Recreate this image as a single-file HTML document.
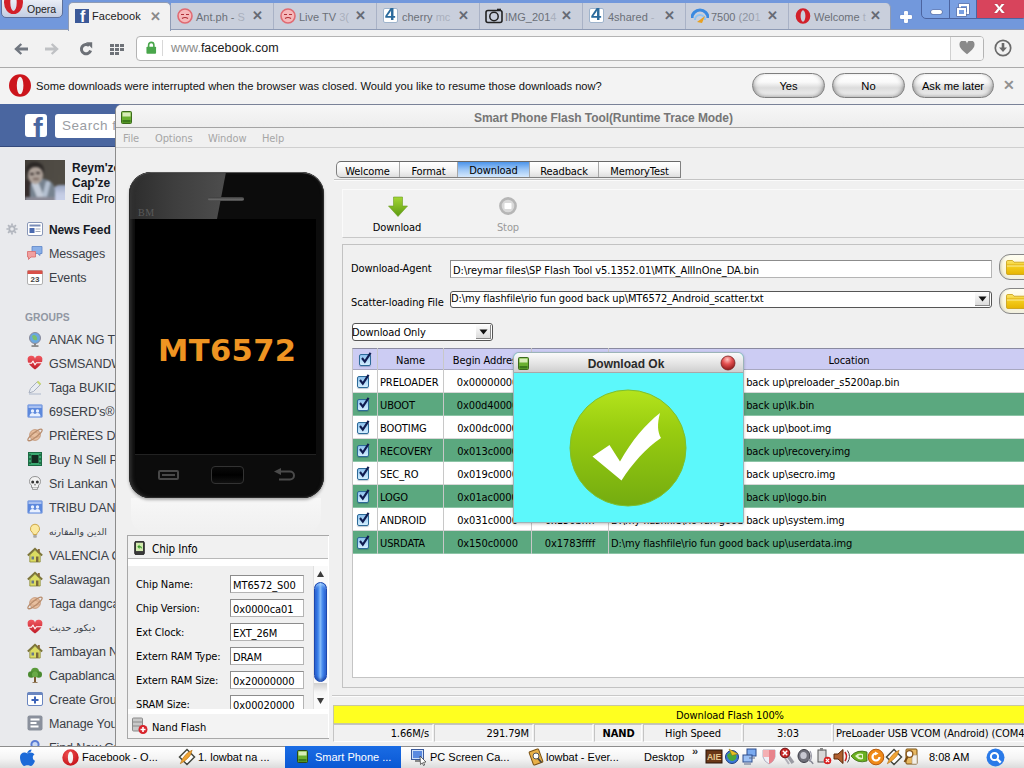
<!DOCTYPE html>
<html>
<head>
<meta charset="utf-8">
<title>Smart Phone Flash Tool</title>
<style>
html,body{margin:0;padding:0;}
body{width:1024px;height:768px;overflow:hidden;position:relative;background:#e9eaed;font-family:"Liberation Sans",sans-serif;font-size:12px;color:#000;}
.a{position:absolute;}
.t{position:absolute;white-space:pre;line-height:14px;}
.th{font-family:"DejaVu Sans Condensed","Liberation Sans",sans-serif;font-size:11px;margin-top:1px;letter-spacing:-0.1px;}
/* ---------- opera chrome ---------- */
#tabbar{left:0;top:0;width:1024px;height:30px;background:#7298dc;}
#toolbar{left:0;top:29px;width:1024px;height:39px;background:#f2f2f2;border-top:1px solid #8e9bb5;box-sizing:border-box;}
#infobar{left:0;top:67px;width:1024px;height:37px;background:#f3f3f3;border-top:1px solid #ababab;box-sizing:border-box;}
.tab{position:absolute;top:3px;height:26px;width:103px;background:#c9cfdc;border-right:1px solid #a9b2c6;box-sizing:border-box;}
.tab .lbl{position:absolute;left:25px;top:7px;font-size:11px;color:#6b6f78;white-space:pre;line-height:14px;}
.tab .x{position:absolute;left:81px;top:6px;font-size:13px;font-weight:bold;color:#666a74;line-height:14px;}
.pill{position:absolute;top:73px;height:25px;border:1px solid #7e7e7e;border-radius:12.5px;box-sizing:border-box;background:linear-gradient(#ffffff 0%,#fafafa 35%,#dcdcdc 60%,#f2f2f2 100%);text-align:center;font-size:11.2px;line-height:25px;box-shadow:inset 0 -2px 3px rgba(0,0,0,.16),inset 4px 0 5px -3px rgba(0,0,0,.25),inset -4px 0 5px -3px rgba(0,0,0,.25);}
/* ---------- facebook ---------- */
#fbhead{left:0;top:104px;width:1024px;height:43px;background:#4a66a0;border-bottom:1px solid #33497c;box-sizing:border-box;}
.fbi{position:absolute;left:49px;margin-top:1px;font-size:12.5px;letter-spacing:-0.12px;color:#3b3f47;white-space:pre;line-height:16px;}
.ico{position:absolute;left:27px;width:16px;height:16px;}
/* ---------- flash tool ---------- */
#ft{left:115px;top:104px;width:920px;height:643px;background:#f0f0f0;border:1px solid #8c8c8c;border-top-color:#7a8298;border-radius:7px 0 0 0;box-sizing:border-box;overflow:hidden;}
.inp{position:absolute;background:#fff;border:1px solid #b4b4b4;border-top-color:#8c8c8c;border-left-color:#8c8c8c;box-sizing:border-box;}
.row{position:absolute;left:353px;width:680px;height:22px;}
.g{background:#5ba87f;}
.w{background:#ffffff;}
.cb{position:absolute;left:4px;top:6px;width:12px;height:12px;box-sizing:border-box;border:1.5px solid #2c6a98;border-radius:2px;background:linear-gradient(#8cc0ec,#b4dcf8 55%,#d4eefe);box-shadow:0 1px 1px rgba(0,40,80,.25);}
.cb svg{position:absolute;left:-1px;top:-5px;}
.vl{position:absolute;top:348px;width:1px;height:206px;background:#c8c8c8;}
/* ---------- taskbar ---------- */
#task{left:0;top:746px;width:1024px;height:22px;background:linear-gradient(#ffffff,#f4f4f4 55%,#dcdcdc);border-top:1px solid #8e8e8e;box-sizing:border-box;}
.tk{position:absolute;top:750px;font-size:11px;white-space:pre;line-height:14px;color:#000;}
</style>
</head>
<body>
<div class="a" id="tabbar"></div>
<!-- opera menu button -->
<div class="a" style="left:1px;top:-3px;width:62px;height:21px;border:1px solid #5c6f9a;border-radius:0 0 5px 5px;box-sizing:border-box;background:linear-gradient(#eef1f8,#c3cde2);overflow:hidden;">
  <svg class="a" style="left:0;top:-7px" width="24" height="24" viewBox="0 0 24 24"><path fill-rule="evenodd" fill="#d2202a" d="M11.500 0a9.500 11.500 0 1 0 0 23a9.500 11.500 0 1 0 0-23zM11.500 3a3.200 8.500 0 1 1 0 17a3.200 8.500 0 1 1 0-17z"/></svg>
  <div class="t" style="left:25px;top:4px;font-size:10.500px;color:#222;">Opera</div>
</div>
<!-- inactive tabs -->
<div class="tab" style="left:171px;"><svg class="a" style="left:6px;top:5px" width="16" height="16" viewBox="0 0 16 16"><circle cx="8" cy="8" r="7" fill="#f6b8ba" stroke="#e06a72" stroke-width="1.6"/><path d="M4 6.5h3M9 6.5h3M5 10.5q3 -2 6 0" stroke="#b03038" stroke-width="1.2" fill="none"/></svg><span class="lbl">Ant.ph - <span style="color:#aab0bd">S</span></span><span class="x">✕</span></div>
<div class="tab" style="left:274px;"><svg class="a" style="left:6px;top:5px" width="16" height="16" viewBox="0 0 16 16"><circle cx="8" cy="8" r="7" fill="#f6b8ba" stroke="#e06a72" stroke-width="1.6"/><path d="M4 6.5h3M9 6.5h3M5 10.5q3 -2 6 0" stroke="#b03038" stroke-width="1.2" fill="none"/></svg><span class="lbl">Live TV <span style="color:#aab0bd">3(</span></span><span class="x">✕</span></div>
<div class="tab" style="left:377px;"><div class="a" style="left:6px;top:5px;width:15px;height:15px;background:#fff;border:1px solid #9fb4cc;box-sizing:border-box;border-radius:2px;"></div><div class="t" style="left:8px;top:3px;font-size:16px;font-weight:bold;color:#2a6a9c;line-height:18px;transform:scaleX(1.15);transform-origin:0 0;">4</div><span class="lbl">cherry <span style="color:#aab0bd">mc</span></span><span class="x">✕</span></div>
<div class="tab" style="left:480px;"><svg class="a" style="left:5px;top:5px" width="18" height="16" viewBox="0 0 18 16"><rect x="1" y="2.5" width="16" height="12" rx="2" fill="none" stroke="#222" stroke-width="1.6"/><circle cx="9" cy="8.5" r="4.2" fill="none" stroke="#222" stroke-width="1.5"/><path d="M12 1.5h4" stroke="#222" stroke-width="1.6"/></svg><span class="lbl">IMG_201<span style="color:#aab0bd">4</span></span><span class="x">✕</span></div>
<div class="tab" style="left:583px;"><div class="a" style="left:6px;top:5px;width:15px;height:15px;background:#fff;border:1px solid #9fb4cc;box-sizing:border-box;border-radius:2px;"></div><div class="t" style="left:8px;top:3px;font-size:16px;font-weight:bold;color:#2a6a9c;line-height:18px;transform:scaleX(1.15);transform-origin:0 0;">4</div><span class="lbl">4shared <span style="color:#aab0bd">-</span></span><span class="x">✕</span></div>
<div class="tab" style="left:686px;"><svg class="a" style="left:5px;top:5px" width="18" height="16" viewBox="0 0 18 16"><path d="M1 10a8 8 0 0 1 16 0" fill="none" stroke="#3a8ae0" stroke-width="3"/><path d="M4 12a5 5 0 0 1 10 0" fill="none" stroke="#8cc4f4" stroke-width="2"/><path d="M6 14l8-6-3 7z" fill="#e8a020"/></svg><span class="lbl">7500 <span style="color:#8e94a1">(20</span><span style="color:#aab0bd">1</span></span><span class="x">✕</span></div>
<div class="tab" style="left:789px;width:102px;border-radius:0 5px 0 0;border-right:1px solid #8e9bb5;"><svg class="a" style="left:6px;top:5px" width="16" height="16" viewBox="0 0 16 16"><path fill-rule="evenodd" fill="#d2202a" d="M8 .3a7.300 7.700 0 1 0 0 15.400a7.300 7.700 0 1 0 0-15.400zM8 2.300a2.400 5.700 0 1 1 0 11.400a2.400 5.700 0 1 1 0-11.400z"/></svg><span class="lbl">Welcome <span style="color:#aab0bd">t</span></span><span class="x">✕</span></div>
<!-- active tab -->
<div class="a" style="left:68px;top:2px;width:103px;height:29px;z-index:3;background:#f2f2f2;border:1px solid #8e9bb5;border-bottom:none;border-radius:5px 5px 0 0;box-sizing:border-box;">
  <div class="a" style="left:6px;top:6px;width:14px;height:14px;background:#3b5998;overflow:hidden;"><div class="t" style="left:5px;top:-1px;font-size:16px;font-weight:bold;color:#fff;line-height:18px;">f</div></div>
  <div class="t" style="left:23px;top:6px;font-size:11px;color:#1c1c1c;letter-spacing:.05px;">Facebook</div>
  <div class="t" style="left:81px;top:7px;font-size:13px;font-weight:bold;color:#8a8a8a;">✕</div>
</div>
<!-- new tab + -->
<div class="a" style="left:903.5px;top:11px;width:4px;height:11.5px;border-radius:1px;background:#fff;box-shadow:0 0 1px rgba(60,80,140,.6);"></div>
<div class="a" style="left:900px;top:14.7px;width:11.5px;height:4px;border-radius:1px;background:#fff;box-shadow:0 0 1px rgba(60,80,140,.6);"></div>
<!-- window controls -->
<div class="a" style="left:921px;top:-3px;width:106px;height:22px;border:1px solid #4c64a0;border-radius:0 0 5px 5px;box-sizing:border-box;background:#7aa0e2;overflow:hidden;">
  <div class="a" style="left:27px;top:0;width:1px;height:22px;background:#4c64a0;"></div>
  <div class="a" style="left:54px;top:0;width:52px;height:22px;background:#d8445c;border-left:1px solid #4c64a0;"></div>
  <div class="a" style="left:9px;top:11.500px;width:11px;height:4.500px;background:#fff;border-radius:2px;box-shadow:0 0 0 .6px #5a6a9a;"></div>
  <div class="a" style="left:37px;top:6px;width:10px;height:10px;border:2px solid #fff;box-sizing:border-box;box-shadow:0 0 0 .6px #5a6a9a;"></div>
  <div class="a" style="left:35px;top:9.500px;width:8.500px;height:8px;border:2px solid #fff;box-sizing:border-box;background:#7aa0e2;box-shadow:0 0 0 .6px #5a6a9a;"></div>
  <div class="t" style="left:72px;top:1px;font-size:17px;font-weight:bold;color:#fff;line-height:18px;transform:scaleX(1.15);transform-origin:0 0;text-shadow:0 0 1px #7a2030;">x</div>
</div>
<!-- toolbar -->
<div class="a" id="toolbar"></div>
<svg class="a" style="left:12px;top:41px" width="116" height="16" viewBox="0 0 116 16">
  <path d="M2.200 8l6.300-5.800 1.600 1.600-2.900 2.700h8.800v3h-8.800l2.900 2.700-1.600 1.600z" fill="#717780"/>
  <path d="M46.800 8l-6.300-5.800-1.600 1.600 2.900 2.700h-8.800v3h8.800l-2.900 2.700 1.600 1.600z" fill="#bfc1c4"/>
  <path d="M77.200 4.600a4.700 4.700 0 1 0 1.400 4.900" fill="none" stroke="#6c7076" stroke-width="3"/>
  <path d="M74 1.200h6.200v6.200z" fill="#6c7076"/>
  <g fill="#6e7278"><rect x="98" y="3" width="4" height="3"/><rect x="103" y="3" width="4" height="3"/><rect x="108" y="3" width="4" height="3"/><rect x="98" y="7" width="4" height="3"/><rect x="103" y="7" width="4" height="3"/><rect x="108" y="7" width="4" height="3"/><rect x="98" y="11" width="4" height="3"/><rect x="103" y="11" width="4" height="3"/></g>
</svg>
<div class="a" style="left:136px;top:36px;width:848px;height:25px;background:#fff;border:1px solid #b4b4b4;border-radius:4px;box-sizing:border-box;"></div>
<svg class="a" style="left:146px;top:41px" width="10.500" height="13.200" viewBox="0 0 12 15"><path d="M3 7v-2.500a3 3 0 0 1 6 0v2.500" fill="none" stroke="#49a64b" stroke-width="1.8"/><rect x="0.500" y="6.500" width="11" height="8" rx="1" fill="#49a64b"/></svg>
<div class="a" style="left:162px;top:40px;width:1px;height:16px;background:#d8d8d8;"></div>
<div class="t" style="left:171px;top:41px;font-size:12.500px;color:#1a1a1a;"><span style="color:#8a8a8a">www.</span>facebook.com</div>
<div class="a" style="left:950px;top:37px;width:1px;height:23px;background:#d0d0d0;"></div>
<div class="a" style="left:951px;top:37px;width:32px;height:23px;background:#f6f6f6;border-radius:0 3px 3px 0;"></div>
<svg class="a" style="left:959px;top:41px" width="16" height="14" viewBox="0 0 18 16"><path d="M9 15C2 9.500 0.500 7 0.500 4.500A4 4 0 0 1 9 3a4 4 0 0 1 8.500 1.500C17.500 7 16 9.500 9 15z" fill="#8a8a8a"/></svg>
<svg class="a" style="left:993px;top:38px" width="20" height="20" viewBox="0 0 20 20"><circle cx="10" cy="10" r="7.700" fill="none" stroke="#6a6a6a" stroke-width="1.700"/><path d="M8.700 5h2.600v4.500h2.700l-4 4.500-4-4.500h2.700z" fill="#6a6a6a"/></svg>
<!-- infobar -->
<div class="a" id="infobar"></div>
<svg class="a" style="left:8px;top:73px" width="24" height="26" viewBox="0 0 24 26"><path fill-rule="evenodd" fill="#cc151c" d="M12 1.200a11 11.300 0 1 0 0 22.600a11 11.300 0 1 0 0-22.600zM12.100 3.700a3.300 8.800 0 1 1 0 17.600a3.300 8.800 0 1 1 0-17.600z"/></svg>
<div class="t" style="left:36px;top:79px;font-size:11.150px;color:#111;">Some downloads were interrupted when the browser was closed. Would you like to resume those downloads now?</div>
<div class="pill" style="left:752px;width:73px;">Yes</div>
<div class="pill" style="left:832px;width:73px;">No</div>
<div class="pill" style="left:912px;width:82px;">Ask me later</div>
<div class="t" style="left:1003px;top:79px;font-size:13.500px;font-weight:bold;color:#909090;">✕</div>

<div class="a" id="fbhead"></div>
<div class="a" style="left:25px;top:114px;width:22px;height:23px;background:#fff;border-radius:3px;overflow:hidden;"><div class="t" style="left:8px;top:0px;font-size:29px;font-weight:bold;color:#4a66a0;line-height:30px;">f</div></div>
<div class="a" style="left:55px;top:114px;width:300px;height:24px;background:#fff;border-radius:3px;"></div>
<div class="t" style="left:62px;top:117px;font-size:13.500px;letter-spacing:.55px;color:#9a9da3;line-height:18px;">Search f</div>
<!-- profile -->
<div class="a" style="left:25px;top:160px;width:40px;height:40px;background:#4a4640;overflow:hidden;">
  <div class="a" style="left:-4px;top:-4px;width:48px;height:48px;filter:blur(1.1px);">
    <div class="a" style="left:0;top:0;width:48px;height:48px;background:linear-gradient(95deg,#3c3834 0%,#4c4842 40%,#524e46 100%);"></div>
    <div class="a" style="left:31px;top:29px;width:20px;height:22px;background:linear-gradient(#98a4c0,#c4cce4 40%,#ccd4ec);border-radius:8px 0 0 0;"></div>
    <div class="a" style="left:3px;top:24px;width:10px;height:18px;background:#342c2c;"></div>
    <div class="a" style="left:9px;top:23px;width:25px;height:27px;background:#76828f;border-radius:8px 12px 0 0;"></div>
    <div class="a" style="left:13px;top:24px;width:7px;height:19px;background:#c4ccd8;border-radius:2px;transform:rotate(-22deg);"></div>
    <div class="a" style="left:23px;top:25px;width:5px;height:16px;background:#b4c0d0;border-radius:2px;transform:rotate(14deg);"></div>
    <div class="a" style="left:4px;top:41px;width:30px;height:7px;background:#8a8a96;"></div>
    <div class="a" style="left:5px;top:6px;width:18px;height:16px;border-radius:50% 50% 40% 40%;background:#2c2826;"></div>
    <div class="a" style="left:7px;top:11px;width:15px;height:17px;border-radius:45% 45% 50% 50%;background:#aca098;"></div>
    <div class="a" style="left:9px;top:17px;width:4px;height:2px;background:#3a3230;border-radius:1px;"></div>
    <div class="a" style="left:15px;top:16px;width:4px;height:2px;background:#3a3230;border-radius:1px;"></div>
    <div class="a" style="left:12px;top:22px;width:6px;height:2px;background:#7a6860;border-radius:1px;"></div>
  </div>
</div>
<div class="t" style="left:72px;top:161px;font-size:12px;font-weight:bold;color:#141823;">Reym'ze</div>
<div class="t" style="left:72px;top:176px;font-size:12px;font-weight:bold;color:#141823;">Cap'ze</div>
<div class="t" style="left:72px;top:192px;font-size:12px;color:#141823;">Edit Profile</div>
<!-- nav -->
<svg class="a" style="left:6px;top:223px" width="12" height="12" viewBox="0 0 14 14"><circle cx="7" cy="7" r="3.200" fill="none" stroke="#b2b6be" stroke-width="2.200"/><g stroke="#b2b6be" stroke-width="2"><path d="M7 .5v2.500M7 11v2.500M.5 7h2.500M11 7h2.500M2.400 2.400l1.800 1.800M9.800 9.800l1.800 1.800M2.400 11.600l1.800-1.800M9.800 4.200l1.800-1.800"/></g></svg>
<svg class="ico" style="top:221px" viewBox="0 0 16 16"><rect x="0.500" y="1.500" width="15" height="13" rx="1.500" fill="#fff" stroke="#8a98b8"/><rect x="2.500" y="3.500" width="11" height="2" fill="#7a8db8"/><rect x="2.500" y="7" width="5" height="5" fill="#4a6ab0"/><rect x="8.500" y="7.500" width="5" height="1" fill="#a0a8b8"/><rect x="8.500" y="10" width="5" height="1" fill="#a0a8b8"/></svg>
<div class="fbi" style="top:221px;font-size:12px;font-weight:bold;color:#141823;">News Feed</div>
<svg class="ico" style="top:245px" viewBox="0 0 16 16"><path d="M5 1.500h10v7h-2v2l-2.500-2h-5.500z" fill="#8ab0e8" stroke="#5a84c8" stroke-width=".8"/><path d="M.5 6.500h8v5.500h-4.500l-2.500 2.500v-2.500h-1z" fill="#f0a0a0" stroke="#d86a6a" stroke-width=".8"/></svg>
<div class="fbi" style="top:245px;">Messages</div>
<svg class="ico" style="top:269px" viewBox="0 0 16 16"><rect x="0.500" y="1.500" width="15" height="14" rx="1.500" fill="#fff" stroke="#b0b0b0"/><rect x="0.500" y="1.500" width="15" height="3.500" fill="#d85048"/><text x="8" y="13" font-size="8" font-weight="bold" text-anchor="middle" fill="#444" font-family="Liberation Sans, sans-serif">23</text></svg>
<div class="fbi" style="top:269px;">Events</div>
<div class="t" style="left:25px;top:311px;font-size:10.300px;font-weight:bold;color:#9197a3;">GROUPS</div>
<svg class="ico" style="top:331px" viewBox="0 0 16 16"><circle cx="8" cy="7" r="5.500" fill="#6aa8e0" stroke="#8a8a9a" stroke-width="1"/><path d="M5 5q2-2 4 0t1 4q-3 1-4-1z" fill="#7ac070"/><rect x="7" y="12.500" width="2" height="2" fill="#888"/><rect x="4.500" y="14.300" width="7" height="1.500" fill="#777"/></svg>
<div class="fbi" style="top:331px;">ANAK NG TIBAY</div>
<svg class="ico" style="top:355px" viewBox="0 0 16 16"><defs><linearGradient id="gh" x1="0" y1="0" x2="0" y2="1"><stop offset="0" stop-color="#f05860"/><stop offset="1" stop-color="#c01c28"/></linearGradient></defs><path d="M8 14.500C2 10 .7 7.500 .7 5.200A3.600 3.600 0 0 1 8 3.800a3.600 3.600 0 0 1 7.300 1.400C15.300 7.500 14 10 8 14.500z" fill="url(#gh)"/><path d="M1 8.200h3.500l1.500-2 2 3.500 1.500-2h5.500" fill="none" stroke="#fff" stroke-width="1.100"/></svg>
<div class="fbi" style="top:355px;">GSMSANDWICH</div>
<svg class="ico" style="top:379px" viewBox="0 0 16 16"><path d="M2 14l1.500-4.500 7-7 3 3-7 7z" fill="#e8ecf2" stroke="#a8b0c0" stroke-width="1"/><path d="M2 15h12" stroke="#b8c0d0" stroke-width="1.200"/><path d="M10.500 2.500l3 3" stroke="#c8d870" stroke-width="2"/></svg>
<div class="fbi" style="top:379px;">Taga BUKIDNON</div>
<svg class="ico" style="top:403px" viewBox="0 0 16 16"><rect x=".5" y="1.500" width="15" height="13" rx="1.500" fill="#5c88dc" stroke="#9cb4e4"/><rect x="1.500" y="2.500" width="13" height="2.500" fill="#a8c0f0"/><circle cx="5.500" cy="8" r="1.700" fill="#e8f0ff"/><circle cx="10.500" cy="8" r="1.700" fill="#e8f0ff"/><path d="M2.500 13.500q0-3.500 3-3.500t3 3.500zM7.500 13.500q0-3.500 3-3.500t3 3.500z" fill="#e8f0ff"/></svg>
<div class="fbi" style="top:403px;">69SERD's® GROUP</div>
<svg class="ico" style="top:427px" viewBox="0 0 16 16"><circle cx="8" cy="8" r="5.400" fill="#e8c0a0" stroke="#c09070" stroke-width=".8"/><path d="M3.500 6.500q4-2.500 9 0M3 9.500q5 2 10 0" stroke="#d4a484" stroke-width="1" fill="none"/><ellipse cx="8" cy="8" rx="8.800" ry="2.200" fill="none" stroke="#b88c6c" stroke-width="1.300" transform="rotate(-38 8 8)"/></svg>
<div class="fbi" style="top:427px;">PRIÈRES DE FOI</div>
<svg class="ico" style="top:451px" viewBox="0 0 16 16"><rect x="1.500" y="1.500" width="13" height="13" fill="#3aa870" stroke="#1c6a44"/><rect x="4.500" y="4" width="7" height="8" fill="#142a20"/><path d="M2 4h2M2 8h2M2 12h2M12 4h2M12 8h2M12 12h2" stroke="#0c3a24"/></svg>
<div class="fbi" style="top:451px;">Buy N Sell Phones</div>
<svg class="ico" style="top:475px" viewBox="0 0 16 16"><path d="M8 1.500c-3.600 0-5.500 2.300-5.500 5 0 2 .9 3 2 3.700v2.300h7v-2.300c1.100-.7 2-1.700 2-3.700 0-2.700-1.900-5-5.500-5z" fill="#f2f2f2" stroke="#8a8a8a" stroke-width=".9"/><circle cx="5.700" cy="7" r="1.500" fill="#333"/><circle cx="10.300" cy="7" r="1.500" fill="#333"/><path d="M8 8.500l-.8 1.700h1.600z" fill="#333"/><path d="M5.500 12.500v2h5v-2" fill="#e8e8e8" stroke="#8a8a8a" stroke-width=".8"/></svg>
<div class="fbi" style="top:475px;">Sri Lankan Vibes</div>
<svg class="ico" style="top:499px" viewBox="0 0 16 16"><rect x=".5" y="1.500" width="15" height="13" rx="1.500" fill="#5c88dc" stroke="#9cb4e4"/><rect x="1.500" y="2.500" width="13" height="2.500" fill="#a8c0f0"/><circle cx="5.500" cy="8" r="1.700" fill="#e8f0ff"/><circle cx="10.500" cy="8" r="1.700" fill="#e8f0ff"/><path d="M2.500 13.500q0-3.500 3-3.500t3 3.500zM7.500 13.500q0-3.500 3-3.500t3 3.500z" fill="#e8f0ff"/></svg>
<div class="fbi" style="top:499px;">TRIBU DANGCAGAN</div>
<svg class="ico" style="top:523px" viewBox="0 0 16 16"><path d="M8 1.200a4.600 4.600 0 0 0-2.700 8.300c.6.500.9 1 .9 2h3.600c0-1 .3-1.500.9-2a4.600 4.600 0 0 0-2.700-8.300z" fill="#fbe9a0" stroke="#c8a040" stroke-width=".9"/><rect x="6.200" y="12" width="3.600" height="2.800" rx=".8" fill="#a8a8a8"/></svg>
<div class="fbi" style="top:523px;font-family:'DejaVu Sans',sans-serif;font-size:9.3px;direction:rtl;">الدين والمقارنه</div>
<svg class="ico" style="top:547px" viewBox="0 0 16 16"><path d="M.8 8.500l7.200-6.800 7.200 6.800" fill="none" stroke="#7c7438" stroke-width="1.800"/><path d="M2.800 8v7h10.400v-7l-5.200-4.800z" fill="#dcdc62" stroke="#8a8a3a" stroke-width=".8"/><rect x="4.500" y="9.500" width="2.500" height="3" fill="#6a7a8a"/><rect x="9" y="9.500" width="2.500" height="5.500" fill="#7a6a3a"/><rect x="10.800" y="2" width="2" height="3.500" fill="#8a6a3a"/></svg>
<div class="fbi" style="top:547px;">VALENCIA CITY</div>
<svg class="ico" style="top:571px" viewBox="0 0 16 16"><path d="M.8 8.500l7.200-6.800 7.200 6.800" fill="none" stroke="#7c7438" stroke-width="1.800"/><path d="M2.800 8v7h10.400v-7l-5.200-4.800z" fill="#dcdc62" stroke="#8a8a3a" stroke-width=".8"/><rect x="4.500" y="9.500" width="2.500" height="3" fill="#6a7a8a"/><rect x="9" y="9.500" width="2.500" height="5.500" fill="#7a6a3a"/><rect x="10.800" y="2" width="2" height="3.500" fill="#8a6a3a"/></svg>
<div class="fbi" style="top:571px;">Salawagan</div>
<svg class="ico" style="top:595px" viewBox="0 0 16 16"><circle cx="8" cy="8" r="5.400" fill="#e8c0a0" stroke="#c09070" stroke-width=".8"/><path d="M3.500 6.500q4-2.500 9 0M3 9.500q5 2 10 0" stroke="#d4a484" stroke-width="1" fill="none"/><ellipse cx="8" cy="8" rx="8.800" ry="2.200" fill="none" stroke="#b88c6c" stroke-width="1.300" transform="rotate(-38 8 8)"/></svg>
<div class="fbi" style="top:595px;">Taga dangcagan</div>
<svg class="ico" style="top:619px" viewBox="0 0 16 16"><defs><linearGradient id="gh" x1="0" y1="0" x2="0" y2="1"><stop offset="0" stop-color="#f05860"/><stop offset="1" stop-color="#c01c28"/></linearGradient></defs><path d="M8 14.500C2 10 .7 7.500 .7 5.200A3.600 3.600 0 0 1 8 3.800a3.600 3.600 0 0 1 7.300 1.400C15.300 7.500 14 10 8 14.500z" fill="url(#gh)"/><path d="M1 8.200h3.500l1.500-2 2 3.500 1.500-2h5.500" fill="none" stroke="#fff" stroke-width="1.100"/></svg>
<div class="fbi" style="top:619px;font-family:'DejaVu Sans',sans-serif;font-size:9.3px;direction:rtl;">ديكور حديث</div>
<svg class="ico" style="top:643px" viewBox="0 0 16 16"><path d="M.8 8.500l7.200-6.800 7.200 6.800" fill="none" stroke="#7c7438" stroke-width="1.800"/><path d="M2.800 8v7h10.400v-7l-5.200-4.800z" fill="#dcdc62" stroke="#8a8a3a" stroke-width=".8"/><rect x="4.500" y="9.500" width="2.500" height="3" fill="#6a7a8a"/><rect x="9" y="9.500" width="2.500" height="5.500" fill="#7a6a3a"/><rect x="10.800" y="2" width="2" height="3.500" fill="#8a6a3a"/></svg>
<div class="fbi" style="top:643px;">Tambayan Ni Juan</div>
<svg class="ico" style="top:667px" viewBox="0 0 16 16"><circle cx="8" cy="4.800" r="4" fill="#5a9a3a"/><circle cx="4.300" cy="7.500" r="3.300" fill="#4a8a30"/><circle cx="11.700" cy="7.500" r="3.300" fill="#4a8a30"/><circle cx="8" cy="7.500" r="3" fill="#6aaa48"/><path d="M7 10h2v5h1.500v.8h-5v-.8h1.500z" fill="#7a5a30"/></svg>
<div class="fbi" style="top:667px;">Capablanca</div>
<svg class="ico" style="top:691px" viewBox="0 0 16 16"><rect x=".5" y="1.500" width="15" height="13" rx="1.500" fill="#fff" stroke="#6a86c0"/><rect x=".5" y="1.500" width="15" height="2.500" fill="#6a86c0"/><path d="M8 5.500v7M4.500 9h7" stroke="#3a62b8" stroke-width="2"/></svg>
<div class="fbi" style="top:691px;">Create Group</div>
<svg class="ico" style="top:715px" viewBox="0 0 16 16"><rect x=".5" y=".5" width="15" height="15" rx="2" fill="#8a909c"/><path d="M3.500 4.500h9M3.500 8h6M3.500 11.500h8" stroke="#fff" stroke-width="1.800"/></svg>
<div class="fbi" style="top:715px;">Manage Your Groups</div>
<svg class="ico" style="top:739px" viewBox="0 0 16 16"><circle cx="8" cy="5.500" r="3.600" fill="#c8d8f4" stroke="#5a7cd4" stroke-width="2"/></svg>
<div class="fbi" style="top:739px;">Find New Groups</div>

<div class="a" id="ft"></div>
<!-- title bar -->
<div class="a" style="left:116px;top:105px;width:908px;height:22px;background:linear-gradient(#f7f7f7,#ededed);border-radius:5px 0 0 0;"></div>
<div class="a" style="left:116px;top:127px;width:908px;height:1px;background:#a4a4a4;"></div>
<div class="a" style="left:116px;top:147px;width:908px;height:1px;background:#cfcfcf;"></div>
<svg class="a" style="left:121px;top:111px" width="11" height="13" viewBox="0 0 11 13"><rect x=".5" y=".5" width="10" height="12" rx="1" fill="#6ab030" stroke="#3c6a1c"/><rect x="1.500" y="1.500" width="8" height="4" fill="#d8ecb8"/><rect x="1.500" y="9" width="8" height="2.500" fill="#3c7a1c"/></svg>
<div class="t" style="left:474px;top:111px;font-size:12px;font-weight:bold;color:#767676;letter-spacing:-0.070px;">Smart Phone Flash Tool(Runtime Trace Mode)</div>
<div class="t th" style="left:123px;top:131px;color:#a6a6a6;">File</div>
<div class="t th" style="left:155px;top:131px;color:#a6a6a6;">Options</div>
<div class="t th" style="left:208px;top:131px;color:#a6a6a6;">Window</div>
<div class="t th" style="left:262px;top:131px;color:#a6a6a6;">Help</div>
<!-- phone -->
<div class="a" style="left:131px;top:498px;width:190px;height:36px;background:linear-gradient(#f7f7f7,#f3f3f3 50%,#f0f0f0);border-radius:0 0 18px 18px;"></div>
<div class="a" style="left:129px;top:172px;width:195px;height:326px;background:#0c0c0c;border-radius:22px 22px 21px 21px;overflow:hidden;box-shadow:0 2px 3px rgba(0,0,0,.3);">
  <div class="a" style="left:0;top:0;width:100px;height:47px;background:linear-gradient(90deg,#2c2c2c,#3e3e3e 45%,#4e4e4e);clip-path:polygon(0 0,97px 0,88px 47px,0 47px);"></div>
  <div class="a" style="left:0;top:0;width:195px;height:326px;border-radius:22px 22px 21px 21px;box-shadow:inset 0 1px 0 0 #585858,inset 0 0 0 1px #2a2a2a,inset 3px 0 4px -1px #3a3a3a,inset -2px 0 3px -1px #2a2a2a;"></div>
  <div class="a" style="left:79px;top:25px;width:36px;height:4px;border-radius:2px;background:linear-gradient(#3a3a3a,#686868 60%,#444);"></div>
  <div class="t" style="left:9px;top:34px;font-family:'Liberation Serif',serif;font-size:10px;color:#5a5a5a;letter-spacing:.5px;">BM</div>
  <div class="a" style="left:6px;top:47px;width:181px;height:235px;background:#000;"></div>
  <div class="a" style="left:6px;top:282px;width:181px;height:1px;background:#222;"></div>
  <!-- soft keys -->
  <div class="a" style="left:29px;top:298px;width:21px;height:10px;border:2px solid #484848;border-radius:2px;box-sizing:border-box;"></div>
  <div class="a" style="left:33px;top:302px;width:13px;height:2px;background:#484848;"></div>
  <div class="a" style="left:82px;top:294px;width:33px;height:18px;border:1px solid #333;border-radius:4px;box-sizing:border-box;background:linear-gradient(#0a0a0a,#000 50%,#111);"></div>
  <svg class="a" style="left:144px;top:296px" width="24" height="14" viewBox="0 0 24 14"><path d="M8 3.500h9a4 4 0 0 1 0 8h-11" fill="none" stroke="#4a4a4a" stroke-width="2"/><path d="M1 3.500l7-3.500v7z" fill="#4a4a4a"/></svg>
  <div class="t" style="left:29px;top:159px;width:138px;text-align:center;font-family:'DejaVu Sans','Liberation Sans',sans-serif;font-size:30.500px;font-weight:bold;color:#ee9422;line-height:40px;letter-spacing:.4px;">MT6572</div>
</div>
<div class="a" style="left:127px;top:535px;width:202px;height:204px;background:#fff;border:1px solid #a8a8a8;border-right:none;box-sizing:border-box;"></div>
<div class="a" style="left:128px;top:536px;width:200px;height:23px;background:#f1f1f1;border-bottom:1px solid #b8b8b8;box-sizing:border-box;"></div>
<svg class="a" style="left:134px;top:541px" width="11" height="14" viewBox="0 0 12 16"><rect x=".5" y=".5" width="11" height="15" rx="1.500" fill="#3a3a3a" stroke="#222"/><rect x="2" y="2" width="8" height="9.500" fill="#d4ecb0"/><path d="M3.500 6.500l2.500-2.500v1.600q3 0 3 3.500-1-1.800-3-1.700v1.600z" fill="#3a9a2a"/></svg>
<div class="t th" style="left:152px;top:541px;font-size:11.6px;">Chip Info</div>
<div class="a" style="left:128px;top:566px;width:200px;height:143px;background:#f0f0f0;"></div>
<div class="t th" style="left:136px;top:577px;">Chip Name:</div>
<div class="inp" style="left:230px;top:575px;width:74px;height:18px;"></div>
<div class="t th" style="left:233px;top:578px;">MT6572_S00</div>
<div class="t th" style="left:136px;top:601px;">Chip Version:</div>
<div class="inp" style="left:230px;top:599px;width:74px;height:18px;"></div>
<div class="t th" style="left:233px;top:602px;">0x0000ca01</div>
<div class="t th" style="left:136px;top:625px;">Ext Clock:</div>
<div class="inp" style="left:230px;top:623px;width:74px;height:18px;"></div>
<div class="t th" style="left:233px;top:626px;">EXT_26M</div>
<div class="t th" style="left:136px;top:649px;">Extern RAM Type:</div>
<div class="inp" style="left:230px;top:647px;width:74px;height:18px;"></div>
<div class="t th" style="left:233px;top:650px;">DRAM</div>
<div class="t th" style="left:136px;top:673px;">Extern RAM Size:</div>
<div class="inp" style="left:230px;top:671px;width:74px;height:18px;"></div>
<div class="t th" style="left:233px;top:674px;">0x20000000</div>
<div class="t th" style="left:136px;top:697px;">SRAM Size:</div>
<div class="inp" style="left:230px;top:695px;width:74px;height:18px;"></div>
<div class="t th" style="left:233px;top:698px;">0x00020000</div>
<div class="a" style="left:128px;top:709px;width:200px;height:29px;background:#fff;"></div>
<div class="a" style="left:128px;top:714px;width:200px;height:24px;background:#f3f3f3;"></div>
<div class="a" style="left:313px;top:566px;width:15px;height:143px;background:#fafafa;border-left:1px solid #e0e0e0;box-sizing:border-box;"></div>
<svg class="a" style="left:317px;top:571px" width="7" height="6" viewBox="0 0 7 6"><path d="M3.500 0l3.500 6h-7z" fill="#3c3c3c"/></svg>
<div class="a" style="left:314px;top:582px;width:13px;height:100px;border-radius:6.5px;border:1px solid #1c48b0;box-sizing:border-box;background:linear-gradient(90deg,#1f58d0,#3f84ec 28%,#86bcf8 48%,#4a8cee 68%,#1f58d0);box-shadow:inset 0 3px 3px -1px rgba(180,220,255,.7),inset 0 -3px 3px -1px rgba(20,50,140,.6);"></div>
<div class="a" style="left:314px;top:683px;width:13px;height:13px;border-radius:0 0 6.5px 6.5px;background:linear-gradient(#cfcfcf,#f6f6f6 70%);"></div>
<svg class="a" style="left:317px;top:698px" width="7" height="6" viewBox="0 0 7 6"><path d="M3.500 6l3.500-6h-7z" fill="#3c3c3c"/></svg>
<svg class="a" style="left:131px;top:717px" width="18" height="18" viewBox="0 0 18 18"><rect x="1.500" y="1" width="10" height="13" rx="1" fill="#c8c8c8" stroke="#8a8a8a"/><path d="M1.500 5h10M1.500 9h10" stroke="#8a8a8a"/><circle cx="12" cy="12.500" r="4.500" fill="#d8242c"/><path d="M12 10v5M9.500 12.500h5" stroke="#fff" stroke-width="1.600"/></svg>
<div class="t th" style="left:152px;top:720px;">Nand Flash</div>
<div class="a" style="left:336px;top:161px;width:345px;height:17px;border:1px solid #808080;border-top-color:#686868;border-radius:5px 0 0 5px;box-sizing:border-box;background:linear-gradient(#ffffff,#f2f2f2 60%,#dedede);"></div>
<div class="a" style="left:457px;top:162px;width:72px;height:15px;background:linear-gradient(#4c94ea,#9cc6f6 50%,#d4e8fc);"></div>
<div class="a" style="left:399px;top:162px;width:1px;height:15px;background:#a8a8a8;"></div>
<div class="a" style="left:457px;top:162px;width:1px;height:15px;background:#a8a8a8;"></div>
<div class="a" style="left:529px;top:162px;width:1px;height:15px;background:#a8a8a8;"></div>
<div class="a" style="left:598px;top:162px;width:1px;height:15px;background:#a8a8a8;"></div>
<div class="t th" style="left:336px;top:164px;width:63px;text-align:center;">Welcome</div>
<div class="t th" style="left:400px;top:164px;width:57px;text-align:center;">Format</div>
<div class="t th" style="left:458px;top:163px;width:71px;text-align:center;">Download</div>
<div class="t th" style="left:530px;top:164px;width:68px;text-align:center;">Readback</div>
<div class="t th" style="left:599px;top:164px;width:81px;text-align:center;">MemoryTest</div>
<div class="a" style="left:334px;top:179px;width:700px;height:1px;background:#c4c4c4;"></div>
<div class="a" style="left:334px;top:180px;width:700px;height:1px;background:#fbfbfb;"></div>
<div class="a" style="left:342px;top:189px;width:700px;height:49px;background:#f2f2f2;border:1px solid #fafafa;border-bottom:1px solid #c8c8c8;box-sizing:border-box;"></div>
<svg class="a" style="left:387px;top:196px" width="22" height="22" viewBox="0 0 22 22"><defs><linearGradient id="ga" x1="0" y1="0" x2="0" y2="1"><stop offset="0" stop-color="#a4d634"/><stop offset="1" stop-color="#5c9a10"/></linearGradient></defs><path d="M6.500 1h9v9h5l-9.500 10.500-9.500-10.500h5z" fill="url(#ga)" stroke="#6a9c20" stroke-width=".6"/></svg>
<div class="t th" style="left:357px;top:220px;width:80px;text-align:center;">Download</div>
<svg class="a" style="left:498px;top:196px" width="20" height="20" viewBox="0 0 20 20"><circle cx="10" cy="10" r="7.600" fill="#dadada" stroke="#b6b6b6" stroke-width="2.600"/><rect x="6.500" y="7" width="7" height="6" rx=".8" fill="#fff"/></svg>
<div class="t th" style="left:478px;top:220px;width:60px;text-align:center;color:#9a9a9a;">Stop</div>
<div class="a" style="left:342px;top:244px;width:700px;height:444px;border:1px solid #c2c2c2;box-sizing:border-box;"></div>
<div class="t th" style="left:351px;top:261px;">Download-Agent</div>
<div class="inp" style="left:450px;top:260px;width:542px;height:18px;"></div>
<div class="t th" style="left:453px;top:263px;letter-spacing:-0.03px;">D:\reymar files\SP Flash Tool v5.1352.01\MTK_AllInOne_DA.bin</div>
<div class="t th" style="left:351px;top:295px;">Scatter-loading File</div>
<div class="a" style="left:450px;top:291px;width:542px;height:17px;background:#fff;border:1px solid #555;border-radius:3px;box-sizing:border-box;"></div>
<div class="t th" style="left:451px;top:291px;">D:\my flashfile\rio fun good back up\MT6572_Android_scatter.txt</div>
<div class="a" style="left:975px;top:292px;width:15px;height:14px;background:linear-gradient(#fdfdfd,#dcdcdc);border-right:1px solid #888;border-bottom:1px solid #888;box-sizing:border-box;"></div>
<svg class="a" style="left:978px;top:296px" width="9" height="6" viewBox="0 0 9 6"><path d="M.5 .5h8l-4 5z" fill="#111"/></svg>
<div class="a" style="left:999px;top:254px;width:40px;height:26px;border:1.5px solid #868686;border-radius:11px;box-sizing:border-box;background:linear-gradient(#fffef2,#fbf6d8 60%,#f2f0e0);box-shadow:inset 3px 0 3px -2px rgba(0,0,0,.2);"></div>
<svg class="a" style="left:1006px;top:260px" width="20" height="15" viewBox="0 0 20 15"><defs><linearGradient id="gf254" x1="0" y1="0" x2="0" y2="1"><stop offset="0" stop-color="#fae46a"/><stop offset=".45" stop-color="#f4cc1c"/><stop offset="1" stop-color="#e6b400"/></linearGradient></defs><path d="M.5 1.800q0-1.300 1.300-1.300h4.700l1.500 1.700h10.500q1.300 0 1.300 1.300v9.700q0 1.300-1.300 1.300h-16.700q-1.300 0-1.300-1.300z" fill="url(#gf254)" stroke="#c89c10" stroke-width=".8"/><path d="M1 5h19" stroke="#d8a810" stroke-width=".9"/><path d="M1 6h19" stroke="#fcee9a" stroke-width="1"/></svg>
<div class="a" style="left:999px;top:288px;width:40px;height:26px;border:1.5px solid #868686;border-radius:11px;box-sizing:border-box;background:linear-gradient(#fffef2,#fbf6d8 60%,#f2f0e0);box-shadow:inset 3px 0 3px -2px rgba(0,0,0,.2);"></div>
<svg class="a" style="left:1006px;top:294px" width="20" height="15" viewBox="0 0 20 15"><defs><linearGradient id="gf288" x1="0" y1="0" x2="0" y2="1"><stop offset="0" stop-color="#fae46a"/><stop offset=".45" stop-color="#f4cc1c"/><stop offset="1" stop-color="#e6b400"/></linearGradient></defs><path d="M.5 1.800q0-1.300 1.300-1.300h4.700l1.500 1.700h10.500q1.300 0 1.300 1.300v9.700q0 1.300-1.300 1.300h-16.700q-1.300 0-1.300-1.300z" fill="url(#gf288)" stroke="#c89c10" stroke-width=".8"/><path d="M1 5h19" stroke="#d8a810" stroke-width=".9"/><path d="M1 6h19" stroke="#fcee9a" stroke-width="1"/></svg>
<div class="a" style="left:352px;top:323px;width:141px;height:18px;background:#fff;border:1px solid #555;border-radius:3px;box-sizing:border-box;"></div>
<div class="t th" style="left:352px;top:325px;">Download Only</div>
<div class="a" style="left:476px;top:325px;width:15px;height:14px;background:linear-gradient(#fdfdfd,#dcdcdc);border-right:1px solid #888;border-bottom:1px solid #888;box-sizing:border-box;"></div>
<svg class="a" style="left:479px;top:329px" width="9" height="6" viewBox="0 0 9 6"><path d="M.5 .5h8l-4 5z" fill="#111"/></svg>
<div class="a" style="left:352px;top:348px;width:690px;height:330px;background:#fff;border:1px solid #c4c4c4;border-top-color:#8a8aa0;box-sizing:border-box;"></div>
<div class="a" style="left:353px;top:349px;width:680px;height:20px;background:#ccccf3;border-bottom:1px solid #a8a8c0;"></div>
<div class="row" style="top:348px;left:355px;height:21px;"><div class="cb"><svg width="14" height="15" viewBox="0 0 14 15"><path d="M3 8l2.800 3.600 5.800-8.800" fill="none" stroke="#101c50" stroke-width="2.100"/></svg></div></div>
<div class="t th" style="left:378px;top:353px;width:65px;text-align:center;">Name</div>
<div class="t th" style="left:444px;top:353px;width:87px;text-align:center;">Begin Address</div>
<div class="t th" style="left:532px;top:353px;width:76px;text-align:center;">End Address</div>
<div class="t th" style="left:609px;top:353px;width:480px;text-align:center;">Location</div>
<div class="row w" style="top:370px;"><div class="cb"><svg width="14" height="15" viewBox="0 0 14 15"><path d="M3 8l2.800 3.600 5.800-8.800" fill="none" stroke="#101c50" stroke-width="2.100"/></svg></div></div>
<div class="a" style="left:353px;top:392px;width:680px;height:1px;background:#d8d8d8;"></div>
<div class="t th" style="left:380px;top:375px;">PRELOADER</div>
<div class="t th" style="left:444px;top:375px;width:87px;text-align:center;">0x00000000</div>
<div class="t th" style="left:532px;top:375px;width:76px;text-align:center;">0x00d3ffff</div>
<div class="t th" style="left:611px;top:375px;">D:\my flashfile\rio fun good back up\preloader_s5200ap.bin</div>
<div class="row g" style="top:393px;"><div class="cb"><svg width="14" height="15" viewBox="0 0 14 15"><path d="M3 8l2.800 3.600 5.800-8.800" fill="none" stroke="#101c50" stroke-width="2.100"/></svg></div></div>
<div class="a" style="left:353px;top:415px;width:680px;height:1px;background:#8cc4a6;"></div>
<div class="t th" style="left:380px;top:398px;">UBOOT</div>
<div class="t th" style="left:444px;top:398px;width:87px;text-align:center;">0x00d40000</div>
<div class="t th" style="left:532px;top:398px;width:76px;text-align:center;">0x00dbffff</div>
<div class="t th" style="left:611px;top:398px;">D:\my flashfile\rio fun good back up\lk.bin</div>
<div class="row w" style="top:416px;"><div class="cb"><svg width="14" height="15" viewBox="0 0 14 15"><path d="M3 8l2.800 3.600 5.800-8.800" fill="none" stroke="#101c50" stroke-width="2.100"/></svg></div></div>
<div class="a" style="left:353px;top:438px;width:680px;height:1px;background:#d8d8d8;"></div>
<div class="t th" style="left:380px;top:421px;">BOOTIMG</div>
<div class="t th" style="left:444px;top:421px;width:87px;text-align:center;">0x00dc0000</div>
<div class="t th" style="left:532px;top:421px;width:76px;text-align:center;">0x013bffff</div>
<div class="t th" style="left:611px;top:421px;">D:\my flashfile\rio fun good back up\boot.img</div>
<div class="row g" style="top:439px;"><div class="cb"><svg width="14" height="15" viewBox="0 0 14 15"><path d="M3 8l2.800 3.600 5.800-8.800" fill="none" stroke="#101c50" stroke-width="2.100"/></svg></div></div>
<div class="a" style="left:353px;top:461px;width:680px;height:1px;background:#8cc4a6;"></div>
<div class="t th" style="left:380px;top:444px;">RECOVERY</div>
<div class="t th" style="left:444px;top:444px;width:87px;text-align:center;">0x013c0000</div>
<div class="t th" style="left:532px;top:444px;width:76px;text-align:center;">0x019bffff</div>
<div class="t th" style="left:611px;top:444px;">D:\my flashfile\rio fun good back up\recovery.img</div>
<div class="row w" style="top:462px;"><div class="cb"><svg width="14" height="15" viewBox="0 0 14 15"><path d="M3 8l2.800 3.600 5.800-8.800" fill="none" stroke="#101c50" stroke-width="2.100"/></svg></div></div>
<div class="a" style="left:353px;top:484px;width:680px;height:1px;background:#d8d8d8;"></div>
<div class="t th" style="left:380px;top:467px;">SEC_RO</div>
<div class="t th" style="left:444px;top:467px;width:87px;text-align:center;">0x019c0000</div>
<div class="t th" style="left:532px;top:467px;width:76px;text-align:center;">0x01abffff</div>
<div class="t th" style="left:611px;top:467px;">D:\my flashfile\rio fun good back up\secro.img</div>
<div class="row g" style="top:485px;"><div class="cb"><svg width="14" height="15" viewBox="0 0 14 15"><path d="M3 8l2.800 3.600 5.800-8.800" fill="none" stroke="#101c50" stroke-width="2.100"/></svg></div></div>
<div class="a" style="left:353px;top:507px;width:680px;height:1px;background:#8cc4a6;"></div>
<div class="t th" style="left:380px;top:490px;">LOGO</div>
<div class="t th" style="left:444px;top:490px;width:87px;text-align:center;">0x01ac0000</div>
<div class="t th" style="left:532px;top:490px;width:76px;text-align:center;">0x031bffff</div>
<div class="t th" style="left:611px;top:490px;">D:\my flashfile\rio fun good back up\logo.bin</div>
<div class="row w" style="top:508px;"><div class="cb"><svg width="14" height="15" viewBox="0 0 14 15"><path d="M3 8l2.800 3.600 5.800-8.800" fill="none" stroke="#101c50" stroke-width="2.100"/></svg></div></div>
<div class="a" style="left:353px;top:530px;width:680px;height:1px;background:#d8d8d8;"></div>
<div class="t th" style="left:380px;top:513px;">ANDROID</div>
<div class="t th" style="left:444px;top:513px;width:87px;text-align:center;">0x031c0000</div>
<div class="t th" style="left:532px;top:513px;width:76px;text-align:center;">0x150bffff</div>
<div class="t th" style="left:611px;top:513px;">D:\my flashfile\rio fun good back up\system.img</div>
<div class="row g" style="top:531px;"><div class="cb"><svg width="14" height="15" viewBox="0 0 14 15"><path d="M3 8l2.800 3.600 5.800-8.800" fill="none" stroke="#101c50" stroke-width="2.100"/></svg></div></div>
<div class="a" style="left:353px;top:553px;width:680px;height:1px;background:#8cc4a6;"></div>
<div class="t th" style="left:380px;top:536px;">USRDATA</div>
<div class="t th" style="left:444px;top:536px;width:87px;text-align:center;">0x150c0000</div>
<div class="t th" style="left:532px;top:536px;width:76px;text-align:center;">0x1783ffff</div>
<div class="t th" style="left:611px;top:536px;">D:\my flashfile\rio fun good back up\userdata.img</div>
<div class="vl" style="left:377px;"></div>
<div class="vl" style="left:443px;"></div>
<div class="vl" style="left:531px;"></div>
<div class="vl" style="left:608px;"></div>
<div class="a" style="left:332px;top:695px;width:700px;height:1px;background:#c8c8c8;"></div>
<div class="a" style="left:332px;top:696px;width:700px;height:1px;background:#fcfcfc;"></div>
<div class="a" style="left:333px;top:705px;width:700px;height:19px;background:#ffff20;border:1px solid #c8c8a0;box-sizing:border-box;"></div>
<div class="t th" style="left:630px;top:708px;width:200px;text-align:center;">Download Flash 100%</div>
<div class="a" style="left:333px;top:724px;width:700px;height:19px;background:#f1f1f1;"></div>
<div class="a" style="left:333px;top:724px;width:100px;height:18px;border:1px solid #c4c4c4;border-right-color:#fdfdfd;border-bottom-color:#fdfdfd;box-sizing:border-box;"></div>
<div class="t th" style="left:333px;top:726px;width:96px;text-align:right;">1.66M/s</div>
<div class="a" style="left:434px;top:724px;width:99px;height:18px;border:1px solid #c4c4c4;border-right-color:#fdfdfd;border-bottom-color:#fdfdfd;box-sizing:border-box;"></div>
<div class="t th" style="left:434px;top:726px;width:95px;text-align:right;">291.79M</div>
<div class="a" style="left:534px;top:724px;width:59px;height:18px;border:1px solid #c4c4c4;border-right-color:#fdfdfd;border-bottom-color:#fdfdfd;box-sizing:border-box;"></div>
<div class="a" style="left:594px;top:724px;width:48px;height:18px;border:1px solid #c4c4c4;border-right-color:#fdfdfd;border-bottom-color:#fdfdfd;box-sizing:border-box;"></div>
<div class="t th" style="left:594px;top:726px;width:49px;text-align:center;font-weight:bold;">NAND</div>
<div class="a" style="left:643px;top:724px;width:99px;height:18px;border:1px solid #c4c4c4;border-right-color:#fdfdfd;border-bottom-color:#fdfdfd;box-sizing:border-box;"></div>
<div class="t th" style="left:643px;top:726px;width:100px;text-align:center;">High Speed</div>
<div class="a" style="left:743px;top:724px;width:89px;height:18px;border:1px solid #c4c4c4;border-right-color:#fdfdfd;border-bottom-color:#fdfdfd;box-sizing:border-box;"></div>
<div class="t th" style="left:743px;top:726px;width:90px;text-align:center;">3:03</div>
<div class="a" style="left:833px;top:724px;width:206px;height:18px;border:1px solid #c4c4c4;border-right-color:#fdfdfd;border-bottom-color:#fdfdfd;box-sizing:border-box;"></div>
<div class="t th" style="left:836px;top:726px;">PreLoader USB VCOM (Android) (COM4)</div>
<div class="a" style="left:513px;top:352px;width:231px;height:171px;background:#5cf8fb;border:1px solid #9cb4b8;border-radius:6px 6px 0 0;box-sizing:border-box;box-shadow:0 1px 3px rgba(0,0,0,.25);"></div>
<div class="a" style="left:514px;top:353px;width:229px;height:20px;background:linear-gradient(#fafafa,#e6e6e6 50%,#cfcfcf);border-radius:5px 5px 0 0;border-bottom:1px solid #a8a8a8;box-sizing:border-box;"></div>
<svg class="a" style="left:518px;top:357px" width="11" height="13" viewBox="0 0 11 13"><rect x=".5" y=".5" width="10" height="12" rx="1" fill="#6ab030" stroke="#3c6a1c"/><rect x="1.500" y="1.500" width="8" height="4" fill="#d8ecb8"/><rect x="1.500" y="9" width="8" height="2.500" fill="#3c7a1c"/></svg>
<div class="t" style="left:526px;top:357px;width:200px;text-align:center;font-size:12px;font-weight:bold;color:#2a2a2a;">Download Ok</div>
<svg class="a" style="left:720px;top:355px" width="16" height="16" viewBox="0 0 16 16"><defs><radialGradient id="gr" cx=".45" cy=".25" r=".85"><stop offset="0" stop-color="#ffc4c0"/><stop offset=".4" stop-color="#e45050"/><stop offset="1" stop-color="#7a0c0c"/></radialGradient></defs><circle cx="8" cy="8" r="7" fill="url(#gr)" stroke="#7a2020" stroke-width=".8"/></svg>
<svg class="a" style="left:568px;top:388px" width="120" height="120" viewBox="0 0 120 120"><defs><linearGradient id="gc" x1="0" y1="0" x2="0" y2="1"><stop offset="0" stop-color="#b4e41c"/><stop offset=".35" stop-color="#98cc10"/><stop offset="1" stop-color="#74ac10"/></linearGradient></defs><circle cx="60" cy="60" r="58" fill="url(#gc)" stroke="#7cc030" stroke-width="1"/><path d="M24.500 68.500L41.500 57L52 73.500C64 52 78 36 92 25C89 36 89.500 44 93 50C78 60 64 76 53.500 92.500z" fill="#fff"/></svg>

<div class="a" id="task"></div>
<svg class="a" style="left:16px;top:747px" width="22" height="21" viewBox="0 0 22 21"><path d="M11 6c1-2.500 3-3.500 4.500-3.500 0 2-1.500 3.500-4.500 3.500zM4 10c0-3 2.300-4.500 4.200-4.500 1.300 0 2 .7 3 .7s2-.8 3.500-.8c1.500 0 3 .8 3.800 2.200-2.500 1.500-2.200 5 .5 6.200-.8 2.300-2.500 5.200-4.300 5.200-1.200 0-1.800-.7-3.200-.7s-2 .7-3.200.7C6.300 19 4 14.500 4 10z" fill="#1c6ad8"/></svg>
<svg class="a" style="left:62px;top:749px" width="17" height="17" viewBox="0 0 17 17"><defs><radialGradient id="go" cx=".4" cy=".3" r=".8"><stop offset="0" stop-color="#f05050"/><stop offset="1" stop-color="#c00c14"/></radialGradient></defs><path fill-rule="evenodd" fill="url(#go)" d="M8.500 .3a8.200 8.200 0 1 0 0 16.400a8.200 8.200 0 1 0 0-16.400zM8.500 2.600a2.600 5.900 0 1 1 0 11.800a2.600 5.900 0 1 1 0-11.800z"/></svg>
<div class="tk" style="left:82px;">Facebook - O...</div>
<svg class="a" style="left:178px;top:748px" width="18" height="18" viewBox="0 0 18 18"><path d="M9 1.500l7.500 7.500-7.500 7.500-7.500-7.500z" fill="#fff" stroke="#454840" stroke-width="1.500"/><path d="M2.300 15.800l2.500-5.600q4-6 9.300-8 -.8 5.800-6.800 10.300z" fill="#f0a434" stroke="#b87820" stroke-width=".7"/></svg>
<div class="tk" style="left:198px;">1. lowbat na ...</div>
<div class="a" style="left:285px;top:746px;width:116px;height:22px;background:linear-gradient(#1a6ce4,#0a58d4);"></div>
<svg class="a" style="left:297px;top:750px" width="11" height="13" viewBox="0 0 11 13"><rect x=".5" y=".5" width="10" height="12" rx="1" fill="#6ab030" stroke="#2c4a14"/><rect x="1.500" y="1.500" width="8" height="4" fill="#d8ecb8"/><rect x="1.500" y="9" width="8" height="2.500" fill="#3c7a1c"/></svg>
<div class="tk" style="left:315px;color:#fff;">Smart Phone ...</div>
<svg class="a" style="left:410px;top:748px" width="18" height="18" viewBox="0 0 18 18"><rect x="1.500" y="1.500" width="12" height="10" fill="#cfe0f8" stroke="#3a5a9c"/><rect x="3" y="3" width="9" height="7" fill="#5a8ae0"/><rect x="5" y="12" width="5" height="2" fill="#888"/><path d="M10 8l6 6-2.500.3 1.200 2.700-1.200.5-1.200-2.700-1.800 1.700z" fill="#fff" stroke="#333" stroke-width=".7"/></svg>
<div class="tk" style="left:430px;">PC Screen Ca...</div>
<svg class="a" style="left:527px;top:748px" width="18" height="18" viewBox="0 0 18 18"><rect x="4" y="2" width="10" height="14" rx="1" transform="rotate(-20 9 9)" fill="#e8b048" stroke="#7a5010"/><circle cx="9" cy="8" r="3" fill="#fff" stroke="#555"/><path d="M11 10.500l3.500 4" stroke="#444" stroke-width="1.800"/></svg>
<div class="tk" style="left:546px;">lowbat - Ever...</div>
<div class="tk" style="left:644px;">Desktop</div>
<div class="tk" style="left:692px;top:744px;font-size:11px;font-weight:bold;color:#333;">»</div>
<!-- tray -->
<svg class="a" style="left:704px;top:747px" width="218" height="20" viewBox="0 0 218 20"><g transform="translate(2 0)"><rect x="0" y="3" width="16" height="13" fill="#6a3818" stroke="#2a1408"/><text x="8" y="13" font-size="8.500" font-weight="bold" text-anchor="middle" fill="#e8c890" font-family="Liberation Sans, sans-serif">AIE</text></g><g transform="translate(20 0)"><circle cx="8" cy="10" r="6.500" fill="#3a78d8" stroke="#1c3c7c"/><path d="M3 8q4-5 8-1t-2 7q-5 0-6-6z" fill="#4aa83a"/><path d="M5 2l9 5-6 1.500z" fill="#e8c020" stroke="#8a6a10" stroke-width=".5"/></g><g transform="translate(38 0)"><rect x="5" y="2" width="9" height="7" fill="#7aaaf0" stroke="#2c4c8c"/><rect x="1" y="8" width="9" height="7" fill="#9cc0f4" stroke="#2c4c8c"/><path d="M2 17h7M7 11h6" stroke="#5a6a8a"/></g><g transform="translate(57 0)"><path d="M2 3h12v7q-1 4.500-6 7-5-2.500-6-7z" fill="#f0f0f6" stroke="#b0b0c0"/><path d="M8 3h6v7q-1 4.500-6 7z" fill="#e8848c"/><path d="M2 3h6v7h-6z" fill="#f4b0b4"/></g><g transform="translate(75 0)"><path d="M9 9l5 7" stroke="#9a9aa2" stroke-width="3.500"/><path d="M6 11l4 6" stroke="#b0b0b8" stroke-width="2"/><circle cx="6" cy="6" r="4.800" fill="#c82828" stroke="#6a1010"/><path d="M3.800 3.800l4.400 4.400M8.200 3.800l-4.400 4.400" stroke="#fff" stroke-width="1.500"/></g><g transform="translate(93 0)"><ellipse cx="7" cy="9" rx="6" ry="6.500" fill="#70707a" stroke="#3a3a44"/><ellipse cx="6.500" cy="8.500" rx="3.200" ry="3.600" fill="#c8c8d2"/><path d="M11 13q4 1 5 4" stroke="#8a8a96" stroke-width="1.500" fill="none"/><path d="M13 4q3 5 0 10" fill="none" stroke="#9a9aa8" stroke-width="1.200"/></g><g transform="translate(112 0)"><rect x="2" y="3" width="8" height="12" fill="#d8d8d8" stroke="#555"/><rect x="4" y="1" width="3" height="3" fill="#888"/><circle cx="11.500" cy="13.500" r="3.800" fill="#d82020"/><path d="M9.800 11.800l3.400 3.400M13.200 11.800l-3.400 3.400" stroke="#fff" stroke-width="1.200"/></g><g transform="translate(129 0)"><path d="M1 7h4l5-4.500v14l-5-4.500h-4z" fill="#b06030" stroke="#5a2808"/><path d="M12 5q3 4.500 0 9" fill="none" stroke="#c82020" stroke-width="1.600"/><path d="M14.500 3.500q4 6 0 12" fill="none" stroke="#444" stroke-width="1"/></g><g transform="translate(147 0)"><path d="M0 9q6-7 16-4v9q-10 3-16-5z" fill="#6ab020" stroke="#3a6a10" stroke-width=".8"/><path d="M4 9q3.500-3.500 8-2v5q-4.500 1.500-8-3z" fill="#e4f4c4"/><path d="M7 9q2-1.500 4-.8v2.500q-2 .5-4-1.700z" fill="#6ab020"/></g><g transform="translate(164 0)"><circle cx="8" cy="10" r="7.800" fill="#f08a18" stroke="#b85a08"/><path d="M11.500 10a3.500 3.500 0 1 1-3.500-3.500" fill="none" stroke="#fff" stroke-width="2.200"/><path d="M7 4.500l3.500 2-3.500 2z" fill="#fff"/></g><g transform="translate(181 1)"><path d="M9 1.500l7.500 7.500-7.500 7.500-7.500-7.500z" fill="#fff" stroke="#454840" stroke-width="1.500"/><path d="M2.300 15.800l2.500-5.600q4-6 9.300-8 -.8 5.800-6.800 10.300z" fill="#f0a434" stroke="#b87820" stroke-width=".7"/></g><g transform="translate(199 0)"><rect x="3" y="2" width="11" height="15" rx="1" fill="#e8b860" stroke="#7a5010"/><path d="M9 8h5v9h-5z" fill="#f4f0e8" stroke="#a89878" stroke-width=".6"/><circle cx="6.500" cy="7" r="3.300" fill="#fff" stroke="#8a5a20" stroke-width="1.300"/><path d="M4.500 10l-3 5" stroke="#7a4a10" stroke-width="2"/></g></svg>
<div class="tk" style="left:929px;">8:08 AM</div>
<svg class="a" style="left:986px;top:748px" width="19" height="19" viewBox="0 0 19 19"><circle cx="9.500" cy="9.500" r="9" fill="#2a7ae8"/><circle cx="8.500" cy="8.500" r="3.600" fill="none" stroke="#fff" stroke-width="2"/><path d="M11.200 11.200l3.500 3.500" stroke="#fff" stroke-width="2.400"/></svg>

</body>
</html>
